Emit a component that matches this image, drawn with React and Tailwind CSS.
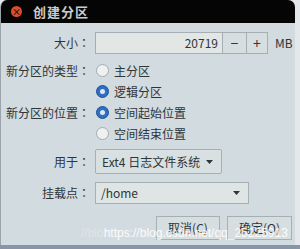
const font = { fontFamily: '"Noto Sans CJK SC", "Noto Sans", sans-serif' };
const colonFont = { fontFamily: '"Noto Sans CJK TC", "Noto Sans CJK SC", sans-serif' };

const Radio = ({ checked, label }) => (
  <div className="flex items-center h-[21px]">
    {checked ? (
      <span className="ml-[1px] w-[13px] h-[13px] rounded-full bg-[#2f6ec2] border border-[#1f5399] flex items-center justify-center">
        <span className="w-[5px] h-[5px] rounded-full bg-[#dce8f6]" />
      </span>
    ) : (
      <span className="ml-[1px] w-[13px] h-[13px] rounded-full bg-[#eef1f0] border border-[#a3acb0]" />
    )}
    <span className="ml-[5px] text-[12px] text-[#2f3539]">{label}</span>
  </div>
);

const Arrow = () => (
  <svg width="7" height="4" viewBox="0 0 7 4">
    <path d="M0 0h7L3.5 4z" fill="#2f3539" />
  </svg>
);

// label text + fullwidth colon (TC font centres the colon in its cell)
const Label = ({ text }) => (
  <div className="w-[90px] text-right text-[12px] text-[#2f3539] pr-[1px]">
    {text}
    <span style={colonFont}>：</span>
  </div>
);

export default function App() {
  return (
    <div className="w-[300px] h-[249px] bg-[#e4e8ea] relative overflow-hidden" style={font}>
      <div className="w-[295px] h-[245px] rounded-t-[7px] bg-[#d2dbdf] border-l border-[#9aa4aa] flex flex-col overflow-hidden">
        {/* title bar */}
        <div className="h-[23px] bg-[#050505] flex items-center pl-[10px] shrink-0">
          <span className="w-[11px] h-[11px] rounded-full bg-[#d9502a] flex items-center justify-center text-[#3a120a] text-[9px] leading-none font-bold">×</span>
          <span className="ml-[11px] text-[13px] text-[#c9cbcc] font-bold tracking-[1px]">创建分区</span>
        </div>

        {/* size */}
        <div className="flex items-center h-[22px] mt-[9px]">
          <Label text="大小" />
          <div className="ml-[4px] flex h-[22px] border border-[#a5aeb2] bg-[#e2e7e6]">
            <div className="w-[126px] flex items-center justify-end pr-[4px] text-[12px] text-[#2f3539]">20719</div>
            <div className="w-[24px] border-l border-[#a5aeb2] bg-[#d6dee0] flex items-center justify-center text-[14px] text-[#2f3539]">−</div>
            <div className="w-[21px] border-l border-[#a5aeb2] bg-[#d6dee0] flex items-center justify-center text-[14px] text-[#2f3539]">+</div>
          </div>
          <span className="ml-[7px] text-[12px] text-[#2f3539]">MB</span>
        </div>

        {/* type / position */}
        <div className="mt-[6px] flex">
          <div className="flex flex-col">
            <div className="h-[21px] flex items-center"><Label text="新分区的类型" /></div>
            <div className="h-[21px]" />
            <div className="h-[21px] flex items-center"><Label text="新分区的位置" /></div>
          </div>
          <div className="ml-[4px] flex flex-col">
            <Radio label="主分区" />
            <Radio checked label="逻辑分区" />
            <Radio checked label="空间起始位置" />
            <Radio label="空间结束位置" />
          </div>
        </div>

        {/* use as */}
        <div className="mt-[5px] flex items-center">
          <Label text="用于" />
          <div className="ml-[4px] w-[127px] h-[25px] rounded-[2px] border border-[#a6afb3] bg-[#d8e0e2] flex items-center pl-[6px] pr-[8px]">
            <span className="text-[12px] text-[#2f3539] flex-1">Ext4 日志文件系统</span>
            <Arrow />
          </div>
        </div>

        {/* mount point */}
        <div className="mt-[8px] flex items-center">
          <Label text="挂载点" />
          <div className="ml-[4px] w-[154px] h-[22px] border border-[#a6afb3] bg-[#dfe5e4] flex items-center pl-[5px] pr-[8px]">
            <span className="text-[12px] text-[#2f3539] flex-1">/home</span>
            <Arrow />
          </div>
        </div>

        {/* buttons */}
        <div className="mt-[12px] flex justify-end gap-[7px] pr-[3px]">
          <button className="w-[64px] h-[24px] border border-[#a6afb3] bg-[#d6dee0] text-[12px] text-[#2f3539]">取消(C)</button>
          <button className="w-[65px] h-[24px] border border-[#a6afb3] bg-[#d6dee0] text-[12px] text-[#2f3539]">确定(O)</button>
        </div>
      </div>
      <div className="h-[4px] bg-[#8795a6]" />

      {/* watermark over the photo */}
      <div
        className="absolute left-[81px] top-[224px] text-[12px] text-white/90 whitespace-nowrap"
        style={{ fontFamily: '"Liberation Sans", Arial, sans-serif' }}
      >
        <span className="text-white/30">//blo</span>https://blog.csdn.net/qq_25225913
      </div>
    </div>
  );
}
